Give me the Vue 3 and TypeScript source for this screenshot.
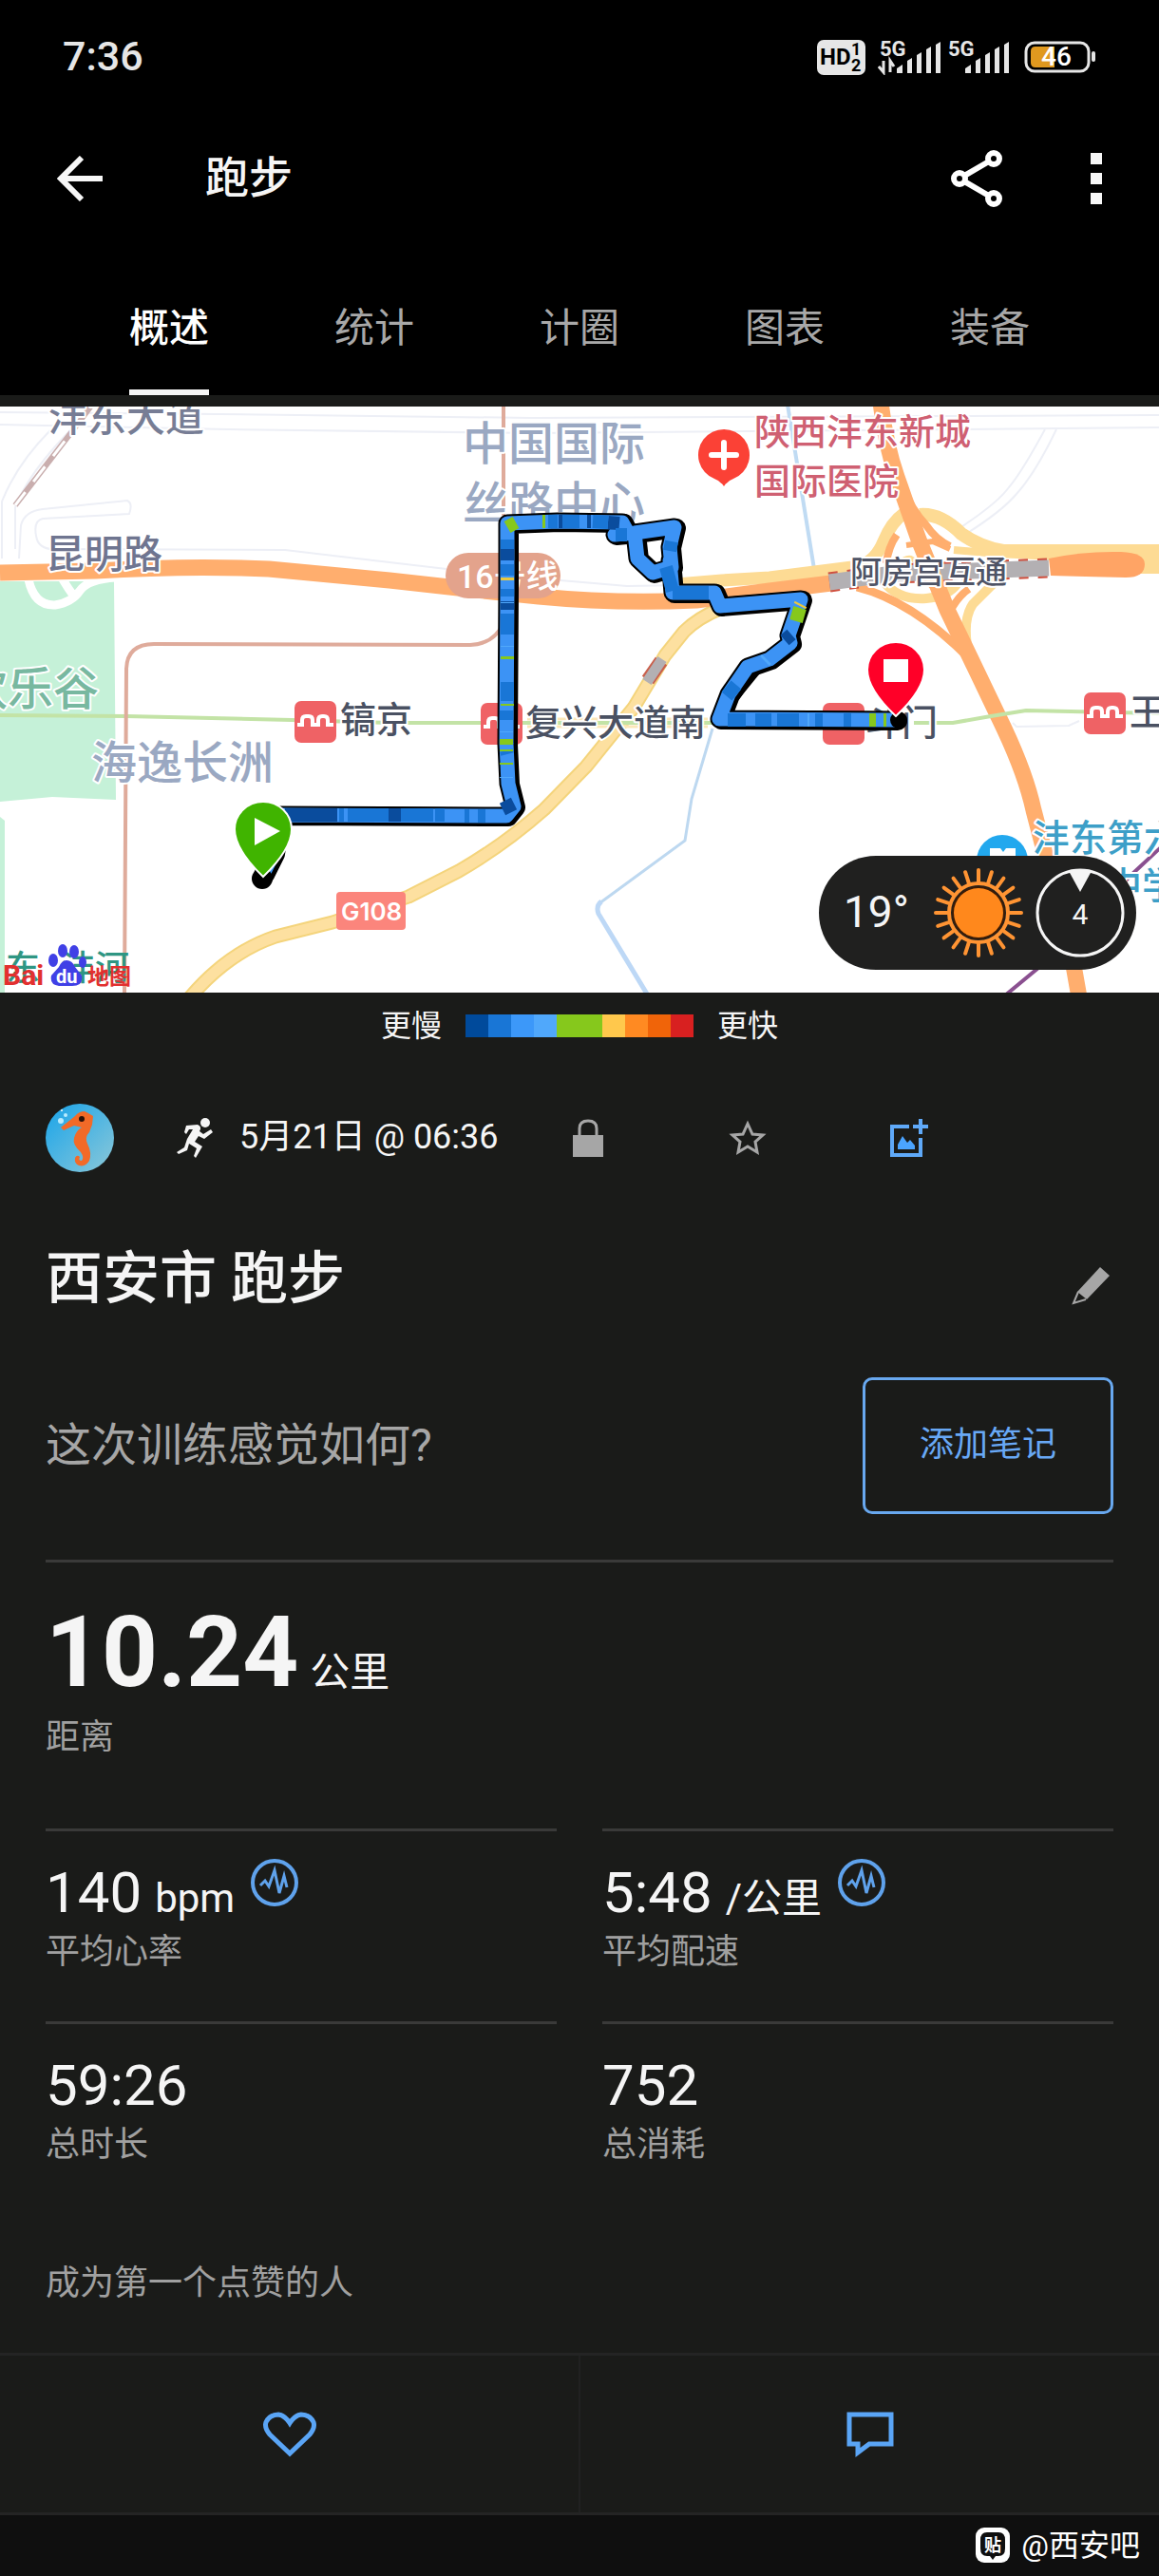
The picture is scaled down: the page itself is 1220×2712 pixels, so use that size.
<script setup lang="ts">
import { ref } from 'vue'

interface Stat {
  value: string
  unit?: string
  label: string
  zone?: boolean
}

interface MapLabel {
  text: string
  x: number
  y: number
  size: number
  color: string
}

interface Road {
  d: string
  color: string
  width: number
}

const tabs = ['概述', '统计', '计圈', '图表', '装备']
const activeTab = ref(0)

const legendColors = [
  '#004a9b', '#1976d6', '#3c98f9', '#50a8fb', '#86c81c',
  '#86c81c', '#ffc84c', '#ff8a22', '#f06409', '#d82020',
]

const stats: Stat[] = [
  { value: '140', unit: 'bpm', label: '平均心率', zone: true },
  { value: '5:48', unit: '/公里', label: '平均配速', zone: true },
  { value: '59:26', label: '总时长' },
  { value: '752', label: '总消耗' },
]

const minorRoads = [
  'M0 6L230 8L560 12L1000 10L1220 9',
  'M0 19L240 24L560 28L900 25L1220 22',
  'M53 25Q18 60 2 100L2 160',
  'M74 25Q30 70 16 106L16 150',
  'M20 160L22 125Q26 110 45 108L134 99Q140 102 136 113L45 118Q35 120 38 136Q40 150 56 150L300 151L410 164L470 171',
  'M590 183L660 189L720 188',
  'M1100 24Q1075 70 1062 85Q1050 102 1007 130',
  'M1112 24Q1090 70 1070 92Q1055 110 1017 134',
  'M1066 333L1070 337L1125 336L1136 331',
]

const roads: Road[] = [
  { d: 'M200 622Q240 575 290 558L350 543L430 516L483 489Q530 462 573 424L617 379L667 317L700 262L720 237Q735 222 760 212', color: '#f4d47c', width: 15 },
  { d: 'M200 622Q240 575 290 558L350 543L430 516L483 489Q530 462 573 424L617 379L667 317L700 262L720 237Q735 222 760 212', color: '#fde0a0', width: 11 },
  { d: 'M555 329L745 329', color: '#fbe7b8', width: 3 },
  { d: 'M555 337L745 337', color: '#fbe7b8', width: 3 },
  { d: 'M700 188L760 183L810 180L905 168Q922 162 930 142Q938 122 952 112', color: '#fddb94', width: 13 },
  { d: 'M968 114Q990 112 1012 134Q1032 148 1056 152L1220 152', color: '#fddb94', width: 14 },
  { d: 'M1004 151L1050 155L1110 158', color: '#fddb94', width: 8 },
  { d: 'M1190 165L1220 165', color: '#fddb94', width: 22 },
  { d: 'M930 184Q945 204 975 202Q998 200 1008 186', color: '#fddb94', width: 10 },
  { d: 'M1020 262Q1012 226 1024 208L1050 182', color: '#fddb94', width: 10 },
  { d: 'M945 166Q962 150 966 172', color: '#fddb94', width: 5 },
  { d: 'M933 165Q935 148 944 135', color: '#ffae6e', width: 8 },
  { d: 'M946 74Q957 106 975 125Q985 140 1000 147', color: '#ffae6e', width: 8 },
  { d: 'M954 146L982 142L1000 150', color: '#ffae6e', width: 6 },
  { d: 'M902 190Q962 205 1025 270', color: '#ffae6e', width: 9 },
  { d: 'M1000 216Q1008 200 1020 192', color: '#ffae6e', width: 8 },
  { d: 'M0 175L100 173Q200 167 283 171L410 183L500 193L567 200Q650 208 733 204L810 194L875 186', color: '#ffae6e', width: 17 },
  { d: 'M927 -5Q932 40 944 74L967 140L997 214L1023 268L1057 339Q1080 388 1088 425L1100 471L1125 560L1136 622', color: '#ffae6e', width: 17 },
]

const labels: MapLabel[] = [
  { text: '沣东大道', x: 51, y: 26, size: 41, color: '#777d95' },
  { text: '昆明路', x: 48, y: 170, size: 41, color: '#6f7590' },
  { text: '欢乐谷', x: -40, y: 314, size: 48, color: '#78b8a0' },
  { text: '海逸长洲', x: 96, y: 392, size: 48, color: '#9aa8c2' },
  { text: '中国国际', x: 487, y: 56, size: 48, color: '#9aa8c2' },
  { text: '丝路中心', x: 487, y: 119, size: 48, color: '#9aa8c2' },
  { text: '镐京', x: 358, y: 343, size: 38, color: '#4a5162' },
  { text: '复兴大道南', x: 553, y: 346, size: 38, color: '#4a5162' },
  { text: '斗门', x: 911, y: 346, size: 38, color: '#4a5162' },
  { text: '王寺', x: 1189, y: 335, size: 38, color: '#4a5162' },
  { text: '阿房宫互通', x: 895, y: 186, size: 33, color: '#4f5466' },
  { text: '陕西沣东新城', x: 794, y: 40, size: 38, color: '#cf6072' },
  { text: '国际医院', x: 794, y: 92, size: 38, color: '#cf6072' },
  { text: '沣东第六', x: 1087, y: 468, size: 39, color: '#3d9fc8' },
  { text: '中学', x: 1163, y: 518, size: 39, color: '#3d9fc8' },
]

const stations = [
  { x: 310, y: 310 },
  { x: 506, y: 312 },
  { x: 866, y: 312 },
  { x: 1141, y: 301 },
]

const route =
  'M277 492L288 470L294 430L533 431L541 421L535 397L533 355L534 189L534 123L587 121L655 122L661 133L647 135L668 133L710 127L705 148L707 169L687 175L671 160L668 133M705 162L708 196L752 196L758 210L843 203L830 241L832 249L810 266L787 274L767 303L757 329L943 330'

// Stretches of the track whose pace differs from its base colour.
const paceBands: Road[] = [
  { d: 'M300 430L355 430M409 430L422 430M534 150L534 162M534 205L534 214M588 121L592 121M618 121L622 121M640 122L652 123M529 424L541 418M833 240L826 246', color: '#0a4c9d', width: 14 },
  { d: 'M357 430L362 430M366 430L409 430M422 430L456 430M458 430L468 430M489 431L494 431M503 431L511 431M534 140L534 150M534 166L534 178M534 192L534 200M534 218L534 240M534 290L534 310M533 320L533 330M533 362L534 366M577 121L587 121M592 121L610 121M624 121L640 122M648 135L660 135M707 142L705 152M701 169L708 194M708 196L746 196M775 293L765 305M766 330L785 330M795 330L812 330M818 330L841 330M858 330L866 330M888 330L896 330', color: '#1976d6', width: 14 },
  { d: 'M534 127L543 122M571 121L574 121M534 263L534 266M534 313L534 315M533 350L533 356M533 361L533 363M533 375L533 377M842 212L838 226M915 330L922 330M930 330L933 330', color: '#86c81c', width: 14 },
  { d: 'M534 180L534 183M843 208L842 210', color: '#e8c840', width: 14 },
  { d: 'M534 206L534 207M534 252L534 253M533 342L533 343M533 390L533 391M850 330L852 330M805 268L807 266', color: '#50a8fb', width: 14 },
]

const sunRays = Array.from({ length: 20 }, (_, i) => i * 18)
</script>

<template>
  <main class="screen">
    <header class="top">
      <div class="status">
        <span class="clock">7:36</span>
        <div class="status-icons">
          <svg width="52" height="38" viewBox="0 0 52 38" aria-hidden="true">
            <rect width="51" height="37" y="1" rx="7" fill="#e6e6e6" />
            <text x="3" y="27" class="hd">HD</text>
            <text x="36" y="17" class="hd-small">1</text>
            <text x="36" y="34" class="hd-small">2</text>
          </svg>
          <svg class="signal" width="68" height="38" viewBox="0 0 68 38" aria-hidden="true">
            <text x="2" y="18" class="net">5G</text>
            <path d="M1 29L6 35V23M13 35V23L17 29" fill="none" stroke="#e6e6e6" stroke-width="3" />
            <path d="M20 36v-5l6-4v9zM31 36v-13l5-3v16zM41 36v-19l5-3v22zM51 36v-25l5-3v28zM61 36v-30l5-3v33z" fill="#e6e6e6" />
          </svg>
          <svg class="signal second" width="68" height="38" viewBox="0 0 68 38" aria-hidden="true">
            <text x="1" y="18" class="net">5G</text>
            <path d="M19 36v-5l6-4v9zM30 36v-13l5-3v16zM40 36v-19l5-3v22zM50 36v-25l5-3v28zM60 36v-30l5-3v33z" fill="#e6e6e6" />
          </svg>
          <svg class="battery" width="76" height="38" viewBox="0 0 76 38" aria-hidden="true">
            <rect x="2" y="4" width="66" height="30" rx="9" fill="none" stroke="#e6e6e6" stroke-width="3" />
            <path d="M12 8H32V30H12Q7 30 7 25V13Q7 8 12 8Z" fill="#e0991f" />
            <rect x="71" y="13" width="4" height="11" rx="2" fill="#e6e6e6" />
            <text x="34" y="28" text-anchor="middle" class="charge">46</text>
          </svg>
        </div>
      </div>

      <div class="app-bar">
        <button class="icon-btn" aria-label="返回">
          <svg width="48" height="48" viewBox="0 0 48 48">
            <path d="M26 2L4 24L26 46M4 24H48" fill="none" stroke="#f7f7f7" stroke-width="6" />
          </svg>
        </button>
        <h1 class="page-name">跑步</h1>
        <button class="icon-btn share" aria-label="分享">
          <svg width="56" height="60" viewBox="0 0 56 60">
            <g fill="none" stroke="#fff" stroke-width="6">
              <path d="M10 30L46 9M10 30L46 51" />
              <circle cx="46" cy="9" r="6" fill="#000" />
              <circle cx="46" cy="51" r="6" fill="#000" />
              <circle cx="10" cy="30" r="6" fill="#000" />
            </g>
          </svg>
        </button>
        <button class="icon-btn" aria-label="更多">
          <svg width="12" height="54" viewBox="0 0 12 54">
            <path d="M0 0h12v12H0zM0 21h12v12H0zM0 42h12v12H0z" fill="#f7f7f7" />
          </svg>
        </button>
      </div>

      <nav class="tabs" role="tablist">
        <button
          v-for="(tab, i) in tabs"
          :key="tab"
          role="tab"
          class="tab"
          :class="{ active: i === activeTab }"
          :aria-selected="i === activeTab"
          @click="activeTab = i"
        >
          <span>{{ tab }}</span>
        </button>
      </nav>
    </header>

    <section class="map">
      <svg class="map-canvas" viewBox="0 0 1220 617" role="img" aria-label="跑步路线">
        <rect width="1220" height="617" fill="#fff" />
        <path d="M0 184H120L122 414L55 411L0 416Z" fill="#c5f1d8" />
        <path d="M0 432L5 436V617H0Z" fill="#c5f1d8" />
        <path d="M30 182Q36 210 58 209Q76 206 84 194T122 180M66 182Q72 192 78 200" fill="none" stroke="#fff" stroke-width="9" />
        <path v-for="d in minorRoads" :key="d" :d="d" fill="none" stroke="#edeff6" stroke-width="2" />
        <path d="M97 -2L76 26L16 104" fill="none" stroke="#c9aeae" stroke-width="6" />
        <path d="M73 30L16 104" fill="none" stroke="#fff" stroke-width="3" stroke-dasharray="20 14" stroke-dashoffset="-8" />
        <path d="M750 339L728 413L721 457L631 523" fill="none" stroke="#bdd8f0" stroke-width="3" />
        <path d="M633 521Q627 526 630 534L682 620" fill="none" stroke="#bdd8f6" stroke-width="5" />
        <path d="M829 -2L857 171" fill="none" stroke="#c0dbf3" stroke-width="4" />
        <path
          v-for="(road, i) in roads"
          :key="i"
          :d="road.d"
          fill="none"
          :stroke="road.color"
          :stroke-width="road.width"
          stroke-linejoin="round"
        />
        <path d="M1104 160Q1140 152 1180 153Q1205 154 1205 166Q1205 180 1185 180Q1140 179 1106 178Z" fill="#ffa465" />
        <path d="M873 185L940 176L1104 170" fill="none" stroke="#d0503f" stroke-width="21" stroke-dasharray="10 10" />
        <path d="M873 185L940 176L1104 170" fill="none" stroke="#b3b0b3" stroke-width="17" />
        <path d="M976 162L986 188" fill="none" stroke="#ffae6e" stroke-width="17" />
        <path d="M682 288L696 268" fill="none" stroke="#c9604c" stroke-width="15" />
        <path d="M681 290L697 266" fill="none" stroke="#b3b0b3" stroke-width="11" />
        <path d="M0 325L133 326L307 330L410 333L750 333M962 333L1003 333L1043 326L1080 320L1220 323" fill="none" stroke="#c3e3a6" stroke-width="4" />
        <path d="M131 620L133 276Q134 250 162 250L495 251Q520 250 530 228V-2" fill="none" stroke="#dfab9b" stroke-width="4" />
        <path d="M1058 620L1093 591L1192 492L1222 464" fill="none" stroke="#8a5090" stroke-width="4" />
        <rect x="469" y="154" width="121" height="48" rx="24" fill="#e3a38c" />
        <text x="481" y="191" class="line-name">16号线</text>
        <g v-for="s in stations" :key="s.x">
          <rect :x="s.x" :y="s.y" width="44" height="44" rx="7" fill="#ef6265" />
          <path
            :transform="`translate(${s.x} ${s.y})`"
            d="M3 25H8V20Q8 16 12 16H15Q19 16 19 20V25H25V20Q25 16 29 16H31Q35 16 35 20V25H41"
            fill="none"
            stroke="#fff"
            stroke-width="4"
          />
        </g>
        <rect x="354" y="511" width="73" height="40" rx="4" fill="#fb857c" />
        <text x="359" y="541" class="road-code">G108</text>
        <path d="M762 84Q758 78 752 76A27 27 0 1 1 772 76Q766 78 762 84Z" fill="#fb4136" />
        <path d="M762 38V64M749 51H775" stroke="#fff" stroke-width="6" stroke-linecap="round" />
        <circle cx="1055" cy="478" r="27" fill="#22a8ee" />
        <path d="M1042 465H1053L1056 469L1059 465H1069V490H1042Z" fill="#fff" />
        <text
          v-for="l in labels"
          :key="l.text"
          class="place"
          :x="l.x"
          :y="l.y"
          :font-size="l.size"
          :fill="l.color"
        >{{ l.text }}</text>

        <path :d="route" transform="translate(2 1)" class="track" stroke="#000" stroke-width="20" />
        <path :d="route" class="track" stroke="#000" stroke-width="19" />
        <path d="M757 329L767 303L800 276Z" fill="none" stroke="#000" stroke-width="6" />
        <path :d="route" class="track" stroke="#3c93f5" stroke-width="15" />
        <path v-for="band in paceBands" :key="band.color" :d="band.d" fill="none" :stroke="band.color" :stroke-width="band.width" />
        <circle cx="276" cy="497" r="11" fill="#000" />
        <circle cx="946" cy="330" r="9" fill="#000" />

        <path d="M277 495Q247 466 247 445A30 29 0 0 1 307 445Q307 466 277 495Z" fill="#40b400" stroke="#fff" stroke-width="2" />
        <path d="M268 433L295 447L268 462Z" fill="#fff" />
        <path d="M943 326Q913 298 913 277A30 29 0 0 1 973 277Q973 298 943 326Z" fill="#ff0028" stroke="#fff" stroke-width="2" />
        <rect x="930" y="266" width="26" height="24" fill="#fff" />

        <text x="6" y="604" class="river">东</text>
        <text x="64" y="604" class="river">沣河</text>
        <text x="3" y="609" class="baidu">Bai</text>
        <g fill="#4040e6">
          <ellipse cx="56" cy="583" rx="5" ry="7" />
          <ellipse cx="66" cy="573" rx="5" ry="7" />
          <ellipse cx="78" cy="574" rx="5" ry="7" />
          <ellipse cx="87" cy="585" rx="4" ry="6" />
          <path d="M70 583Q76 583 79 590L86 599Q88 610 76 610H62Q52 609 54 599L62 590Q65 583 70 583Z" />
        </g>
        <text x="59" y="607" class="baidu-du">du</text>
        <text x="92" y="608" class="baidu-map">地图</text>
      </svg>

      <div class="weather">
        <span class="temp">19°</span>
        <svg width="94" height="94" viewBox="-47 -47 94 94" role="img" aria-label="晴">
          <path v-for="a in sunRays" :key="a" :transform="`rotate(${a})`" d="M0 -33V-45" stroke="#ff9433" stroke-width="4" stroke-linecap="round" />
          <circle r="31" fill="#20201f" stroke="#ff9433" stroke-width="4" />
          <circle r="28" fill="#3c1c06" />
          <circle r="26" fill="#ff881c" />
        </svg>
        <svg width="94" height="94" viewBox="-47 -47 94 94" role="img" aria-label="风速 4">
          <circle r="45" fill="none" stroke="#f5f5f5" stroke-width="3" />
          <path d="M-12 -44Q0 -48 12 -44L0 -22Z" fill="#f5f5f5" />
          <text y="12" text-anchor="middle" class="wind">4</text>
        </svg>
      </div>
    </section>

    <div class="legend">
      <span>更慢</span>
      <div class="scale">
        <i v-for="(c, i) in legendColors" :key="i" :style="{ background: c }"></i>
      </div>
      <span>更快</span>
    </div>

    <section class="body">
      <div class="meta">
        <svg class="avatar" width="72" height="72" viewBox="0 0 72 72" role="img" aria-label="头像">
          <defs>
            <linearGradient id="sea" x1="0" y1="0" x2="1" y2="1">
              <stop offset="0" stop-color="#18a4ea" />
              <stop offset="1" stop-color="#8cc8d8" />
            </linearGradient>
          </defs>
          <circle cx="36" cy="36" r="36" fill="url(#sea)" />
          <circle cx="16" cy="18" r="3" fill="#b9ecff" />
          <circle cx="21" cy="12" r="2" fill="#b9ecff" />
          <circle cx="17" cy="7" r="1" fill="#fff" />
          <path d="M16 25L31 13Q35 8 41 8L45 10L50 13L49 22L46 30Q41 35 44 42Q49 52 46 60Q42 67 35 65Q30 63 31 57Q33 53 36 56Q34 60 38 60Q41 57 37 51Q28 43 30 36Q32 28 38 25L30 23L19 28Z" fill="#f26a28" />
          <circle cx="38" cy="16" r="3" fill="#2d1108" />
        </svg>
        <svg class="runner" width="38" height="42" viewBox="0 0 38 42" aria-hidden="true">
          <circle cx="30" cy="5" r="5" fill="#f5f5f5" />
          <path d="M10 8L22 7Q27 9 24 14L28 17L36 12L38 15L29 22L23 19L19 25L27 30L20 42L18 40L21 32L13 27L11 34L2 38L0 36L8 31L11 22L17 12L13 12L10 17L8 15Z" fill="#f5f5f5" />
        </svg>
        <time class="date">5月21日 @ 06:36</time>
        <button class="icon-btn lock" aria-label="隐私">
          <svg width="32" height="40" viewBox="0 0 32 40">
            <path d="M7 20V10Q7 2 16 2T25 10V20" fill="none" stroke="#a6a6a6" stroke-width="3" />
            <rect y="17" width="32" height="23" fill="#a6a6a6" />
          </svg>
        </button>
        <button class="icon-btn star" aria-label="收藏">
          <svg width="40" height="38" viewBox="0 0 40 38">
            <path d="M20 4L25 15L36 16L28 23L30 34L20 28L10 34L12 23L4 16L15 15Z" fill="none" stroke="#a6a6a6" stroke-width="3" />
          </svg>
        </button>
        <button class="icon-btn" aria-label="添加照片">
          <svg width="40" height="40" viewBox="0 0 40 40">
            <path d="M20 8H2V38H32V20" fill="none" stroke="#5fa9f8" stroke-width="4" />
            <path d="M32 0V16M24 8H40" stroke="#5fa9f8" stroke-width="4" />
            <path d="M8 32V27L13 18L18 25L21 22L26 28V32Z" fill="#4ba4ff" />
          </svg>
        </button>
      </div>

      <div class="title-row">
        <h2>西安市 跑步</h2>
        <button class="icon-btn" aria-label="编辑名称">
          <svg width="44" height="40" viewBox="2 0 44 40">
            <path d="M32 0L42 9L18 34L8 26Z" fill="#a6a6a6" />
            <path d="M9 26L4 38L17 34" fill="none" stroke="#a6a6a6" stroke-width="2" />
          </svg>
        </button>
      </div>

      <div class="feeling">
        <p>这次训练感觉如何?</p>
        <button class="note-btn">添加笔记</button>
      </div>

      <div class="distance">
        <div class="value"><strong>10.24</strong><span class="unit">公里</span></div>
        <p class="label">距离</p>
      </div>

      <div class="stats">
        <div v-for="s in stats" :key="s.label" class="stat">
          <div class="value">
            <span class="number">{{ s.value }}</span>
            <span v-if="s.unit" class="unit">{{ s.unit }}</span>
            <button v-if="s.zone" class="icon-btn zone" :aria-label="s.label + '图表'">
              <svg width="50" height="50" viewBox="0 0 50 50">
                <circle cx="25" cy="25" r="23" fill="none" stroke="#5fa2ec" stroke-width="4" />
                <path d="M10 28L15 23L19 29L25 12L30 36L35 18L38 30" fill="none" stroke="#5fa2ec" stroke-width="3" />
              </svg>
            </button>
          </div>
          <p class="label">{{ s.label }}</p>
        </div>
      </div>

      <p class="likes">成为第一个点赞的人</p>
    </section>

    <footer class="actions">
      <button aria-label="点赞">
        <svg width="58" height="48" viewBox="0 0 58 48">
          <path d="M29 44L8 24Q2 17 4 11Q8 3 17 3Q24 4 29 12Q34 4 41 3Q50 3 54 11Q56 17 50 24Z" fill="none" stroke="#5aa5f6" stroke-width="5" />
        </svg>
      </button>
      <button aria-label="评论">
        <svg width="50" height="48" viewBox="0 0 50 48">
          <path d="M3 3H47V34H24L12 43V34H3Z" fill="none" stroke="#5aa5f6" stroke-width="5" />
        </svg>
      </button>
    </footer>

    <div class="credit">
      <svg width="36" height="38" viewBox="0 0 36 38" aria-hidden="true">
        <rect width="36" height="37" rx="9" fill="#fff" />
        <path d="M12 5H24Q31 5 31 13V22Q31 30 24 30H21L18 34L15 30H12Q5 30 5 22V13Q5 5 12 5Z" fill="#0f0f0f" />
        <text x="18" y="25" text-anchor="middle" class="credit-mark">贴</text>
      </svg>
      <span>@西安吧</span>
    </div>
  </main>
</template>

<style>
body {
  margin: 0;
  background: #0f0f0f;
}
</style>

<style scoped>
.screen {
  background: #1a1b19;
  color: #f5f5f5;
  font-family: Roboto, "Noto Sans CJK SC", sans-serif;
  font-size: 36px;
  line-height: 1.2;
}

h1, h2, p {
  margin: 0;
  font-weight: 400;
}

button {
  padding: 0;
  border: 0;
  background: none;
  font: inherit;
  color: inherit;
}

svg {
  display: block;
}

.icon-btn {
  display: flex;
}

.top {
  background: #000;
}

.status {
  display: flex;
  align-items: center;
  justify-content: space-between;
  height: 120px;
  padding: 0 66px;
}

.clock {
  font-size: 43px;
  font-weight: 500;
  color: #e6e6e6;
}

.status-icons {
  display: flex;
  align-items: center;
}

.signal {
  margin-left: 12px;
}

.second {
  margin-left: 5px;
}

.battery {
  margin-left: 13px;
}

.hd {
  font-size: 24px;
  font-weight: 700;
}

.hd-small {
  font-size: 18px;
  font-weight: 700;
}

.net {
  font-size: 22px;
  font-weight: 700;
  fill: #e6e6e6;
}

.charge {
  font-size: 28px;
  font-weight: 500;
  fill: #fff;
}

.app-bar {
  display: flex;
  align-items: center;
  height: 136px;
  padding: 0 60px;
}

.page-name {
  flex: 1;
  margin-left: 108px;
  font-size: 46px;
  font-weight: 500;
}

.share {
  margin-right: 92px;
}

.tabs {
  display: flex;
  height: 160px;
  padding: 0 70px;
}

.tab {
  display: flex;
  flex: 1;
  justify-content: center;
  font-size: 42px;
  line-height: 60px;
  color: #a8a8a8;
}

.tab span {
  box-sizing: border-box;
  height: 160px;
  padding-top: 60px;
}

.tab.active {
  color: #fff;
  font-weight: 500;
}

.tab.active span {
  border-bottom: 6px solid #f5f5f5;
}

.map {
  position: relative;
  padding-top: 12px;
}

.map-canvas {
  width: 100%;
  height: auto;
}

.place {
  font-weight: 500;
  stroke: #fff;
  stroke-width: 4px;
  stroke-linejoin: round;
  paint-order: stroke;
}

.line-name {
  font-size: 34px;
  font-weight: 500;
  fill: #fff;
}

.road-code {
  font-family: Inter, sans-serif;
  font-size: 26px;
  font-weight: 600;
  fill: #fff;
}

.track {
  fill: none;
  stroke-linecap: round;
  stroke-linejoin: round;
}

.river {
  font-size: 36px;
  font-weight: 500;
  fill: #2f9683;
}

.baidu {
  font-size: 30px;
  font-weight: 700;
  fill: #e2302f;
}

.baidu-du {
  font-size: 20px;
  font-weight: 700;
  fill: #fff;
}

.baidu-map {
  font-size: 23px;
  font-weight: 700;
  fill: #e2302f;
}

.weather {
  position: absolute;
  right: 24px;
  bottom: 24px;
  display: flex;
  align-items: center;
  gap: 13px;
  height: 120px;
  padding: 0 12px 0 26px;
  border-radius: 60px;
  background: #20201f;
}

.temp {
  width: 80px;
  margin-right: 2px;
  font-size: 46px;
}

.wind {
  font-size: 30px;
  fill: #f5f5f5;
}

.legend {
  display: flex;
  align-items: center;
  justify-content: center;
  gap: 25px;
  height: 70px;
  font-size: 32px;
}

.scale {
  display: flex;
  width: 240px;
  height: 24px;
}

.scale i {
  flex: 1;
}

.body {
  padding: 47px 48px 52px;
}

.meta {
  display: flex;
  align-items: center;
}

.runner {
  margin-left: 66px;
}

.date {
  margin-left: 28px;
}

.lock {
  margin-left: 78px;
}

.star {
  margin: 0 130px 0 132px;
}

.title-row {
  display: flex;
  align-items: center;
  justify-content: space-between;
  height: 80px;
  margin-top: 73px;
}

h2 {
  font-size: 60px;
  font-weight: 500;
}

.title-row .icon-btn {
  margin-top: 14px;
}

.feeling {
  display: flex;
  align-items: center;
  justify-content: space-between;
  margin-top: 63px;
  padding-bottom: 48px;
  border-bottom: 3px solid #3a3a39;
}

.feeling p {
  font-size: 48px;
  color: #a6a6a6;
}

.note-btn {
  height: 144px;
  padding: 0 57px;
  border: 3px solid #68a8ef;
  border-radius: 10px;
  color: #68a8f5;
}

.value {
  display: flex;
  align-items: baseline;
}

.distance {
  padding: 35px 0 75px;
}

.distance .value {
  gap: 12px;
  line-height: 120px;
}

strong {
  font-size: 103px;
}

.value .unit {
  font-size: 42px;
  line-height: 1;
}

.label,
.likes {
  line-height: 42px;
  color: #a0a0a0;
}

.distance .label {
  margin-top: 8px;
}

.stats {
  display: grid;
  grid-template-columns: 1fr 1fr;
  column-gap: 48px;
}

.stat {
  padding: 29px 0 52px;
  border-top: 3px solid #3a3a39;
}

.stat .value {
  gap: 14px;
  line-height: 72px;
}

.stat .label {
  margin-top: 5px;
}

.number {
  font-size: 60px;
}

.zone {
  align-self: flex-start;
  margin-left: 3px;
}

.likes {
  margin-top: 52px;
}

.actions {
  display: flex;
  border-top: 3px solid #242424;
  border-bottom: 3px solid #242424;
}

.actions button {
  display: flex;
  flex: 1;
  align-items: center;
  justify-content: center;
  height: 165px;
}

.actions button + button {
  border-left: 2px solid #212121;
}

.credit {
  display: flex;
  align-items: center;
  justify-content: flex-end;
  gap: 12px;
  height: 64px;
  padding-right: 20px;
  background: #0f0f0f;
  color: #fff;
  font-size: 32px;
}

.credit-mark {
  font-size: 18px;
  font-weight: 700;
  fill: #fff;
}
</style>
